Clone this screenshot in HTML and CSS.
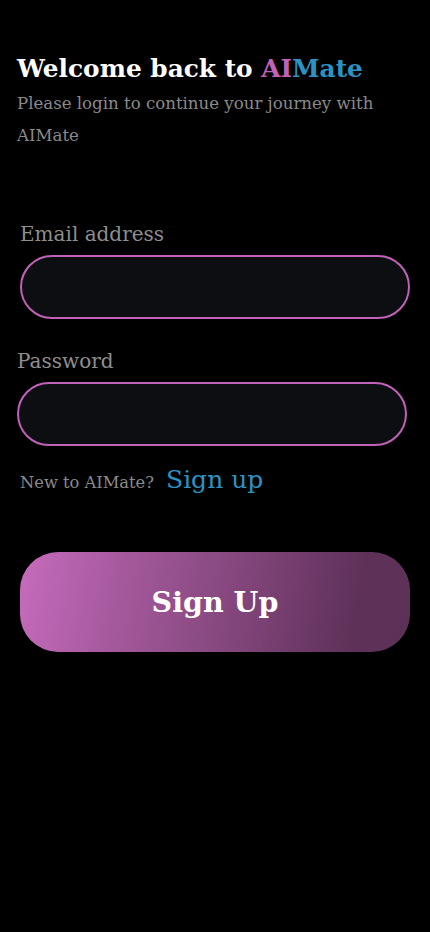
FILE: index.html
```html
<!DOCTYPE html>
<html lang="en">
<head>
<meta charset="utf-8">
<title>AIMate Login</title>
<link rel="stylesheet" href="styles.css">
</head>
<body>
<main class="page">
  <header class="intro">
    <h1 class="title">Welcome back to <span class="ai">AI</span><span class="mate">Mate</span></h1>
    <p class="subtitle">Please login to continue your journey with AIMate</p>
  </header>
  <form class="form">
    <label class="label label-email" for="email">Email address</label>
    <input class="field field-email" id="email" type="email">
    <label class="label label-pass" for="pass">Password</label>
    <input class="field field-pass" id="pass" type="password">
    <div class="signup-row">
      <span class="new">New to AIMate?</span>
      <a class="signup-link" href="#">Sign up</a>
    </div>
    <button class="btn" type="button">Sign Up</button>
  </form>
</main>
</body>
</html>
```
FILE: styles.css
```css
html, body {
  margin: 0;
  padding: 0;
  background: #000;
}
body {
  width: 430px;
  height: 932px;
  font-family: "DejaVu Serif", "Liberation Serif", serif;
}
.page {
  padding: 50px 0 0 0;
}
.intro {
  padding: 0 17px;
}
.title {
  margin: 0;
  font-size: 24.8px;
  line-height: 38px;
  font-weight: bold;
  color: #fff;
}
.ai { color: #c062b8; }
.mate { color: #2b93c4; }
.subtitle {
  margin: 0;
  width: 380px;
  font-size: 16.6px;
  line-height: 32px;
  color: #8a8a8a;
}
.form {
  display: flex;
  flex-direction: column;
  margin-top: 67px;
}
.label {
  font-size: 20px;
  line-height: 30px;
  color: #8e8e8e;
}
.label-email { margin-left: 20px; }
.label-pass { margin-left: 17px; margin-top: 27px; }
.field {
  box-sizing: border-box;
  width: 390px;
  height: 64px;
  margin-top: 6px;
  border: 2px solid #c062b8;
  border-radius: 32px;
  background: #0d0e11;
  outline: none;
  padding: 0 24px;
  color: #fff;
  font-size: 18px;
}
.field-email { margin-left: 20px; }
.field-pass { margin-left: 17px; }
.signup-row {
  display: flex;
  align-items: baseline;
  gap: 12px;
  margin: 19px 0 0 20px;
}
.new {
  font-size: 16.3px;
  color: #8a8a8a;
}
.signup-link {
  font-size: 25px;
  color: #2b93c4;
  text-decoration: none;
}
.btn {
  margin: 58px 0 0 20px;
  width: 390px;
  height: 100px;
  border: none;
  border-radius: 38px;
  background: linear-gradient(100deg, #c66bbc 0%, #a65a9e 25%, #83467c 55%, #5f3159 85%, #5c3157 100%);
  color: #fff;
  font-family: "DejaVu Serif", "Liberation Serif", serif;
  font-weight: bold;
  font-size: 28.5px;
  cursor: pointer;
}
```
